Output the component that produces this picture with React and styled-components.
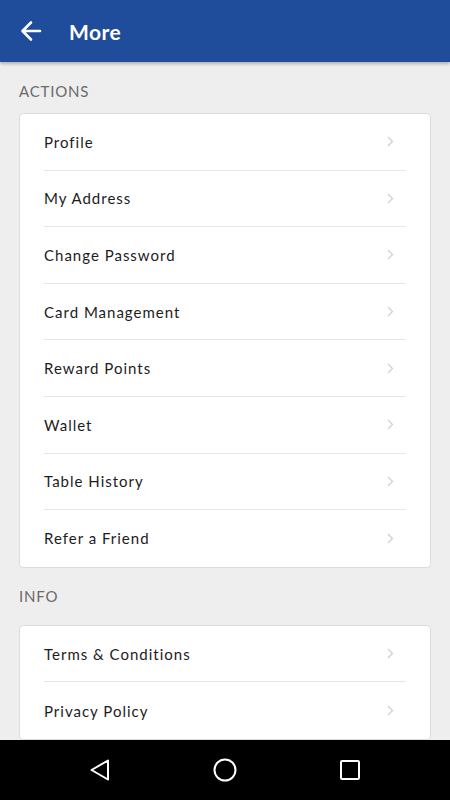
import React from 'react'
import styled, { createGlobalStyle } from 'styled-components'

const GlobalStyle = createGlobalStyle`
  html, body {
    margin: 0;
    padding: 0;
    background: #eeeeee;
  }
  body {
    font-family: "Lato", "Liberation Sans", sans-serif;
  }
`

const Screen = styled.div`
  width: 450px;
  height: 800px;
  display: flex;
  flex-direction: column;
  background: #eeeeee;
  overflow: hidden;
`

const Header = styled.header`
  height: 62px;
  flex-shrink: 0;
  background: #1f4d9b;
  display: flex;
  align-items: center;
  padding: 0 0 0 18px;
  box-shadow: 0 2px 3px rgba(0, 0, 0, 0.25);
  position: relative;
  z-index: 1;
`

const BackButton = styled.div`
  width: 26px;
  height: 26px;
  display: flex;
  align-items: center;
  justify-content: center;
`

const Title = styled.h1`
  margin: 0 0 0 25px;
  color: #ffffff;
  font-size: 21px;
  font-weight: 700;
  letter-spacing: 0.5px;
`

const Content = styled.main`
  flex: 1;
  overflow: hidden;
  padding: 0 19px;
`

const SectionLabel = styled.div`
  color: #6b6b6b;
  font-size: 15px;
  letter-spacing: 0.8px;
  height: ${p => p.first ? '51px' : '57px'};
  display: flex;
  align-items: center;
  padding-top: ${p => p.first ? '6px' : '0'};
  box-sizing: border-box;
`

const Card = styled.div`
  background: #ffffff;
  border: 1px solid #dcdcdc;
  border-radius: 4px;
  padding: 0 24px;
`

const Row = styled.div`
  height: 56.6px;
  display: flex;
  align-items: center;
  justify-content: space-between;
  border-bottom: ${p => p.last ? 'none' : '1px solid #e6e6e6'};
  box-sizing: border-box;
  padding-right: 12px;
  color: #1c1c1c;
  font-size: 15px;
  letter-spacing: 1px;
`

const NavBar = styled.nav`
  height: 60px;
  flex-shrink: 0;
  background: #000000;
  display: flex;
  align-items: center;
  justify-content: center;
  gap: 101px;
`

const Chevron = () => (
  <svg width="7" height="11" viewBox="0 0 7 11">
    <path d="M1 1l4.5 4.5L1 10" fill="none" stroke="#cfcfcf" strokeWidth="1.2" />
  </svg>
)

const actions = [
  'Profile',
  'My Address',
  'Change Password',
  'Card Management',
  'Reward Points',
  'Wallet',
  'Table History',
  'Refer a Friend'
]

const info = ['Terms & Conditions', 'Privacy Policy']

export default function App() {
  return (
    <Screen>
      <GlobalStyle />
      <Header>
        <BackButton>
          <svg width="24" height="24" viewBox="0 0 24 24">
            <path d="M21 12H4M12 3.5L3.5 12l8.5 8.5" fill="none" stroke="#fff" strokeWidth="2.6" strokeLinecap="round" strokeLinejoin="round" />
          </svg>
        </BackButton>
        <Title>More</Title>
      </Header>
      <Content>
        <SectionLabel first>ACTIONS</SectionLabel>
        <Card>
          {actions.map((a, i) => (
            <Row key={a} last={i === actions.length - 1}>
              {a}
              <Chevron />
            </Row>
          ))}
        </Card>
        <SectionLabel>INFO</SectionLabel>
        <Card>
          {info.map((a, i) => (
            <Row key={a} last={i === info.length - 1}>
              {a}
              <Chevron />
            </Row>
          ))}
        </Card>
      </Content>
      <NavBar>
        <svg width="24" height="24" viewBox="0 0 24 24">
          <path d="M20 2.5L3.5 12L20 21.5z" fill="none" stroke="#fff" strokeWidth="2" strokeLinejoin="round" />
        </svg>
        <svg width="24" height="24" viewBox="0 0 24 24">
          <circle cx="12" cy="12" r="10.5" fill="none" stroke="#fff" strokeWidth="2" />
        </svg>
        <svg width="24" height="24" viewBox="0 0 24 24">
          <rect x="3" y="3" width="18" height="18" rx="1" fill="none" stroke="#fff" strokeWidth="2" />
        </svg>
      </NavBar>
    </Screen>
  )
}
